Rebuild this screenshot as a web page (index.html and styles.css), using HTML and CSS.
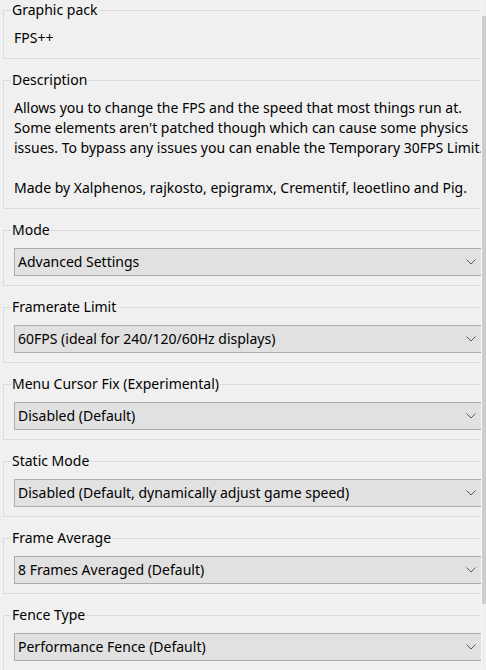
FILE: index.html
```html
<!DOCTYPE html>
<html>
<head>
<meta charset="utf-8">
<link rel="stylesheet" href="styles.css">
</head>
<body>
<div class="window">
  <div class="panel">
    <fieldset class="group group-text">
      <legend>Graphic pack</legend>
      <div class="text">FPS++</div>
    </fieldset>
    <fieldset class="group group-text">
      <legend>Description</legend>
      <div class="text">Allows you to change the FPS and the speed that most things run at.<br>Some elements aren't patched though which can cause some physics<br>issues. To bypass any issues you can enable the Temporary 30FPS Limit.<br><br>Made by Xalphenos, rajkosto, epigramx, Crementif, leoetlino and Pig.</div>
    </fieldset>
    <fieldset class="group group-combo">
      <legend>Mode</legend>
      <div class="combo"><span class="value">Advanced Settings</span><svg class="chev" width="10" height="6" viewBox="0 0 10 6"><polyline points="0.5,0.5 5,5 9.5,0.5" /></svg></div>
    </fieldset>
    <fieldset class="group group-combo">
      <legend>Framerate Limit</legend>
      <div class="combo"><span class="value">60FPS (ideal for 240/120/60Hz displays)</span><svg class="chev" width="10" height="6" viewBox="0 0 10 6"><polyline points="0.5,0.5 5,5 9.5,0.5" /></svg></div>
    </fieldset>
    <fieldset class="group group-combo">
      <legend>Menu Cursor Fix (Experimental)</legend>
      <div class="combo"><span class="value">Disabled (Default)</span><svg class="chev" width="10" height="6" viewBox="0 0 10 6"><polyline points="0.5,0.5 5,5 9.5,0.5" /></svg></div>
    </fieldset>
    <fieldset class="group group-combo">
      <legend>Static Mode</legend>
      <div class="combo"><span class="value">Disabled (Default, dynamically adjust game speed)</span><svg class="chev" width="10" height="6" viewBox="0 0 10 6"><polyline points="0.5,0.5 5,5 9.5,0.5" /></svg></div>
    </fieldset>
    <fieldset class="group group-combo">
      <legend>Frame Average</legend>
      <div class="combo"><span class="value">8 Frames Averaged (Default)</span><svg class="chev" width="10" height="6" viewBox="0 0 10 6"><polyline points="0.5,0.5 5,5 9.5,0.5" /></svg></div>
    </fieldset>
    <fieldset class="group group-combo">
      <legend>Fence Type</legend>
      <div class="combo"><span class="value">Performance Fence (Default)</span><svg class="chev" width="10" height="6" viewBox="0 0 10 6"><polyline points="0.5,0.5 5,5 9.5,0.5" /></svg></div>
    </fieldset>
  </div>
  <div class="edge"></div>
  <div class="scrollbar">
    <div class="track-top"></div>
    <div class="thumb"></div>
    <div class="track-bottom"></div>
  </div>
</div>
</body>
</html>
```
FILE: styles.css
```css
html, body {
  margin: 0;
  padding: 0;
  background: #f0f0f0;
}
body {
  width: 486px;
  height: 670px;
  overflow: hidden;
  font-family: "Noto Sans", "Open Sans", sans-serif;
  font-size: 14px;
  line-height: 20px;
  color: #000;
}
.window {
  display: flex;
  height: 670px;
}
.panel {
  width: 481px;
  height: 670px;
  overflow: hidden;
  flex: none;
}
.edge {
  width: 1px;
  background: #f9f9f9;
  flex: none;
}
.scrollbar {
  width: 4px;
  flex: none;
  display: flex;
  flex-direction: column;
}
.track-top {
  height: 16px;
  background: #f0f0f0;
}
.thumb {
  height: 588px;
  background: #cdcdcd;
}
.track-bottom {
  flex: 1;
  background: #f0f0f0;
}
.group {
  margin: 0 0 11px 3px;
  width: 500px;
  border: 1px solid #dcdcdc;
  padding: 8px 0 10px 10px;
  box-sizing: border-box;
  min-width: 0;
}
.group legend {
  padding: 0 1px;
  margin-left: -3px;
  line-height: 20px;
  white-space: nowrap;
}
.group-combo {
  padding-bottom: 9px;
}
.text {
  white-space: nowrap;
}
.combo {
  width: 476px;
  height: 28px;
  box-sizing: border-box;
  border: 1px solid #adadad;
  background: #e1e1e1;
  display: flex;
  align-items: center;
  justify-content: space-between;
  padding: 0 13px 0 3px;
}
.value {
  white-space: nowrap;
}
.chev {
  flex: none;
}
.chev polyline {
  fill: none;
  stroke: #5a5a5a;
  stroke-width: 1;
}
```
